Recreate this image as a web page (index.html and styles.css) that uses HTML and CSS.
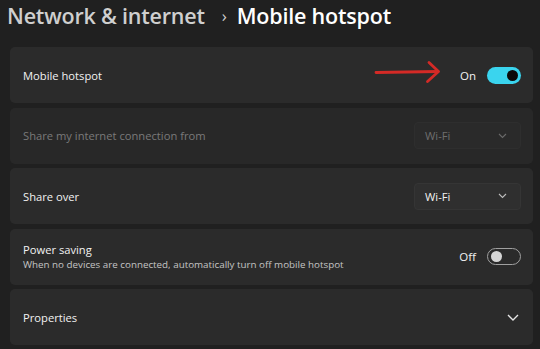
FILE: index.html
```html
<!DOCTYPE html>
<html>
<head>
<meta charset="utf-8">
<link rel="stylesheet" href="styles.css">
</head>
<body>
<div class="page">
  <h1 class="title"><span class="crumb">Network &amp; internet</span><span class="sep">›</span><span class="current">Mobile hotspot</span></h1>
  <div class="list">
    <div class="card">
      <div class="label">Mobile hotspot</div>
      <div class="right">
        <svg class="arrow" width="70" height="24" viewBox="0 0 70 24"><path d="M2 12.5 L64 11.5" stroke="#d42a26" stroke-width="2.8" fill="none" stroke-linecap="round"/><path d="M55 2.5 L64.5 11.5 L53.5 21.5" stroke="#d42a26" stroke-width="2.8" fill="none" stroke-linecap="round" stroke-linejoin="round"/></svg>
        <span class="state">On</span>
        <span class="toggle on"><span class="knob"></span></span>
      </div>
    </div>
    <div class="card disabled">
      <div class="label dim">Share my internet connection from</div>
      <div class="dropdown dd-disabled"><span>Wi-Fi</span><svg class="chev" width="9" height="6" viewBox="0 0 9 6"><path d="M1 1 L4.5 4.5 L8 1" stroke="currentColor" stroke-width="1.1" fill="none"/></svg></div>
    </div>
    <div class="card">
      <div class="label">Share over</div>
      <div class="dropdown"><span>Wi-Fi</span><svg class="chev" width="9" height="6" viewBox="0 0 9 6"><path d="M1 1 L4.5 4.5 L8 1" stroke="currentColor" stroke-width="1.1" fill="none"/></svg></div>
    </div>
    <div class="card">
      <div class="labels">
        <div class="label">Power saving</div>
        <div class="sub">When no devices are connected, automatically turn off mobile hotspot</div>
      </div>
      <div class="right">
        <span class="state">Off</span>
        <span class="toggle off"><span class="knob"></span></span>
      </div>
    </div>
    <div class="card">
      <div class="label">Properties</div>
      <svg class="expand" width="12" height="7" viewBox="0 0 12 7"><path d="M1 1 L6 6 L11 1" stroke="#e6e6e6" stroke-width="1.4" fill="none"/></svg>
    </div>
  </div>
</div>
</body>
</html>
```
FILE: styles.css
```css
html, body {
  margin: 0;
  padding: 0;
  background: #202020;
}
body {
  font-family: "Open Sans", "Liberation Sans", sans-serif;
  color: #ffffff;
  width: 540px;
  height: 349px;
  overflow: hidden;
}
.page {
  padding: 0 7px 0 10px;
}
.title {
  margin: 0 0 0 -3px;
  height: 47px;
  display: flex;
  align-items: center;
  font-size: 21.5px;
  font-weight: 600;
  padding-bottom: 16px;
  box-sizing: border-box;
  letter-spacing: -0.2px;
}
.crumb {
  color: #cfcfcf;
}
.sep {
  color: #cfcfcf;
  font-size: 17px;
  margin: 0 10px 0 17px;
  font-weight: 400;
}
.current {
  color: #ffffff;
}
.list {
  display: flex;
  flex-direction: column;
  gap: 4.5px;
}
.card {
  height: 56px;
  background: #2b2b2b;
  border-radius: 5px;
  display: flex;
  align-items: center;
  justify-content: space-between;
  padding: 0 12px 0 13px;
  box-sizing: border-box;
}
.card.disabled {
  background: #282828;
}
.label {
  font-size: 11.2px;
  color: #f2f2f2;
}
.label.dim {
  color: #7a7a7a;
}
.sub {
  font-size: 9.8px;
  color: #c5c5c5;
  margin-top: 1px;
}
.right {
  display: flex;
  align-items: center;
}
.arrow {
  margin-right: 16px;
  margin-top: -6px;
}
.state {
  font-size: 11.5px;
  color: #f2f2f2;
  margin-right: 11px;
}
.toggle {
  width: 34px;
  height: 17px;
  border-radius: 9px;
  box-sizing: border-box;
  display: flex;
  align-items: center;
  padding: 0 3px;
}
.toggle.on {
  background: #3ad4ee;
  justify-content: flex-end;
}
.toggle.on .knob {
  width: 11px;
  height: 11px;
  border-radius: 50%;
  background: #0b0b0b;
}
.toggle.off {
  border: 1.2px solid #a0a0a0;
  justify-content: flex-start;
}
.toggle.off .knob {
  width: 11px;
  height: 11px;
  border-radius: 50%;
  background: #d6d6d6;
}
.dropdown {
  width: 107px;
  height: 27px;
  border-radius: 4px;
  background: #2f2f2f;
  border: 1px solid #353535;
  box-sizing: border-box;
  display: flex;
  align-items: center;
  justify-content: space-between;
  padding: 0 13px 0 10px;
  font-size: 11.2px;
  color: #f2f2f2;
}
.dropdown .chev {
  color: #bdbdbd;
}
.dropdown.dd-disabled {
  background: #2a2a2a;
  border-color: #2e2e2e;
  color: #6e6e6e;
}
.dropdown.dd-disabled .chev {
  color: #6a6a6a;
}
.expand {
  margin-right: 2px;
}
```
